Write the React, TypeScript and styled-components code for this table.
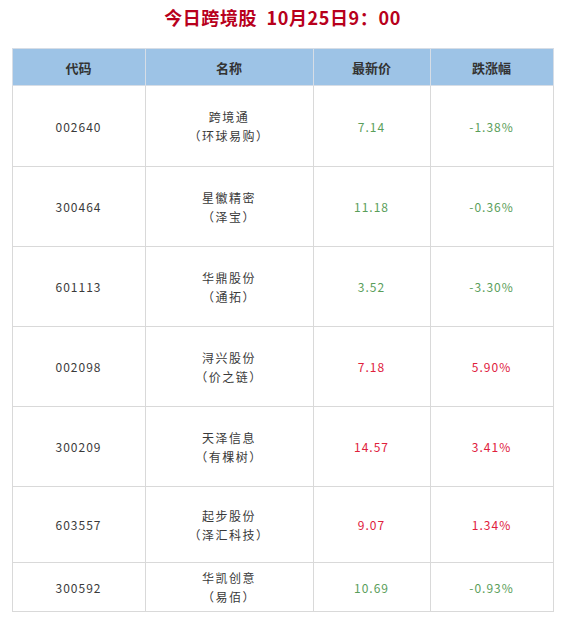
import React from "react";
import styled, { createGlobalStyle } from "styled-components";

const Global = createGlobalStyle`
  html, body { margin: 0; padding: 0; background: #ffffff; }
  body { font-family: "Noto Sans CJK SC", "Noto Sans", sans-serif; color: #333; }
`;

const Page = styled.div`
  width: 565px;
  padding-top: 3px;
  display: flex;
  flex-direction: column;
  align-items: center;
`;

const Title = styled.h1`
  margin: 0;
  height: 28px;
  line-height: 28px;
  font-size: 18px;
  font-weight: 700;
  letter-spacing: 0.6px;
  color: #b8001c;
  white-space: pre;
`;

const Table = styled.table`
  margin-top: 17px;
  width: 541px;
  border-collapse: collapse;
  table-layout: fixed;
`;

const HeadCell = styled.th`
  height: 36px;
  padding: 0;
  background: #9dc3e6;
  border: 1px solid #d6dde6;
  font-size: 13px;
  font-weight: 700;
  color: #333;
  text-align: center;
`;

const Row = styled.tr<{ $h: number }>`
  height: ${(p) => p.$h}px;
`;

const Cell = styled.td<{ $tone?: "up" | "down" | "plain" }>`
  padding: 0;
  border: 1px solid #d9d9d9;
  text-align: center;
  vertical-align: middle;
  font-size: 12px;
  line-height: 19px;
  letter-spacing: 1px;
  color: ${(p) =>
    p.$tone === "up" ? "#e0203c" : p.$tone === "down" ? "#5a9e5a" : "#3a3a3a"};
`;

const NameLine = styled.div`
  letter-spacing: 1.5px;
`;

type Stock = {
  code: string;
  name: string;
  alias: string;
  price: string;
  change: string;
  h: number;
};

const stocks: Stock[] = [
  { code: "002640", name: "跨境通", alias: "（环球易购）", price: "7.14", change: "-1.38%", h: 81 },
  { code: "300464", name: "星徽精密", alias: "（泽宝）", price: "11.18", change: "-0.36%", h: 80 },
  { code: "601113", name: "华鼎股份", alias: "（通拓）", price: "3.52", change: "-3.30%", h: 80 },
  { code: "002098", name: "浔兴股份", alias: "（价之链）", price: "7.18", change: "5.90%", h: 80 },
  { code: "300209", name: "天泽信息", alias: "（有棵树）", price: "14.57", change: "3.41%", h: 80 },
  { code: "603557", name: "起步股份", alias: "（泽汇科技）", price: "9.07", change: "1.34%", h: 76 },
  { code: "300592", name: "华凯创意", alias: "（易佰）", price: "10.69", change: "-0.93%", h: 49 },
];

export default function App() {
  return (
    <Page>
      <Global />
      <Title>{"今日跨境股  10月25日9：00"}</Title>
      <Table>
        <colgroup>
          <col style={{ width: 133 }} />
          <col style={{ width: 168 }} />
          <col style={{ width: 117 }} />
          <col style={{ width: 123 }} />
        </colgroup>
        <thead>
          <tr>
            <HeadCell>代码</HeadCell>
            <HeadCell>名称</HeadCell>
            <HeadCell>最新价</HeadCell>
            <HeadCell>跌涨幅</HeadCell>
          </tr>
        </thead>
        <tbody>
          {stocks.map((s) => {
            const tone = s.change.startsWith("-") ? "down" : "up";
            return (
              <Row key={s.code} $h={s.h}>
                <Cell>{s.code}</Cell>
                <Cell>
                  <NameLine>{s.name}</NameLine>
                  <NameLine>{s.alias}</NameLine>
                </Cell>
                <Cell $tone={tone}>{s.price}</Cell>
                <Cell $tone={tone}>{s.change}</Cell>
              </Row>
            );
          })}
        </tbody>
      </Table>
    </Page>
  );
}
